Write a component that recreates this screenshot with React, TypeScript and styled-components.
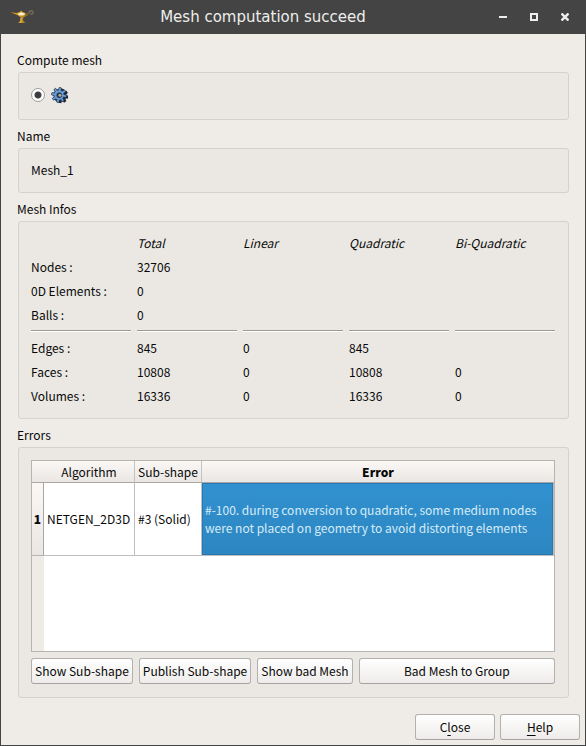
import React, { useId } from "react";
import styled, { createGlobalStyle, css } from "styled-components";

const GlobalStyle = createGlobalStyle`
  * { box-sizing: border-box; }
  body {
    margin: 0;
    background: #efebe7;
    color: #080808;
    font-family: "Noto Sans CJK SC", "Noto Sans", sans-serif;
    font-size: 12px;
    line-height: 18px;
  }
`;

const Window = styled.div`
  display: flex;
  flex-direction: column;
  min-height: 100vh;
  border: 1px solid #444444;
  border-top: 0;
  background: #efebe7;
`;

const TitleBar = styled.header`
  display: grid;
  grid-template-columns: 34px 1fr 94px;
  align-items: center;
  height: 34px;
  background: #444444;
  color: #eeeeec;
`;

const Title = styled.h1`
  margin: 0;
  font: 400 15px/20px "DejaVu Sans", sans-serif;
  text-align: center;
  white-space: nowrap;
`;

const LampIcon = styled.svg`
  display: block;
  margin-left: 7px;
`;

const WindowControls = styled.div`
  display: flex;
  justify-content: flex-end;
  gap: 11px;
  padding-right: 10px;
`;

const ControlButton = styled.button`
  display: grid;
  place-items: center;
  width: 20px;
  height: 20px;
  padding: 0;
  border: 0;
  background: none;
`;

const Content = styled.main`
  display: flex;
  flex: 1;
  flex-direction: column;
  gap: 4px;
  padding: 14px 16px 16px;
`;

const GroupRoot = styled.section<{ $grow?: boolean }>`
  display: flex;
  flex-direction: column;
  ${(p) => p.$grow && css`flex: 1;`}
`;

const GroupTitle = styled.h2`
  margin: 0;
  font-size: 12px;
  font-weight: 400;
  line-height: 24px;
`;

const GroupBox = styled.div`
  display: flex;
  flex: 1;
  flex-direction: column;
  margin-left: 1px;
  padding: 12px 13px 13px 12px;
  border: 1px solid #d5d1cd;
  border-radius: 3px;
  background: #ebe8e4;
`;

const AlgoChoice = styled.label`
  display: flex;
  align-items: flex-start;
  gap: 6px;
  height: 21px;
  padding-top: 2px;
`;

const Radio = styled.input`
  appearance: none;
  width: 14px;
  height: 14px;
  margin: 1px 0 0;
  border: 1px solid #a09e9b;
  border-radius: 50%;
  background: #ffffff;
  &:checked {
    background: radial-gradient(circle, #3c3c3c 0 2px, #444444 3px, #ffffff 4px);
  }
`;

const InfoTable = styled.table`
  display: grid;
  grid-template-columns: repeat(5, minmax(0, 1fr));
  gap: 6px;
  thead, tbody, tr { display: contents; }
`;

const InfoHead = styled.th`
  height: 18px;
  padding: 0;
  font-weight: 400;
  font-style: italic;
  text-align: left;
`;

const InfoLabel = styled.th`
  height: 18px;
  padding: 0;
  font-weight: 400;
  text-align: left;
`;

const InfoCell = styled.td`
  height: 18px;
  padding: 0;
`;

const RuleCell = styled.td`
  height: 3px;
  padding: 0;
  border-top: 1px solid #9c9a97;
  box-shadow: inset 0 1px #ffffff;
`;

const ErrorView = styled.div`
  flex: 1;
  border: 1px solid #b6b4b1;
  background: linear-gradient(90deg, #efebe7 12px, #ffffff 12px);
`;

const ErrorTable = styled.table`
  width: 100%;
  border-collapse: separate;
  border-spacing: 0;
  table-layout: fixed;
`;

const HeadCell = styled.th<{ $active?: boolean }>`
  height: 22px;
  padding: 0;
  border-right: 1px solid #c4c1be;
  border-bottom: 1px solid #a9a7a4;
  background: linear-gradient(#fbf7f4, #e9e6e3);
  font-weight: ${(p) => (p.$active ? 900 : 400)};
  text-align: center;
  white-space: nowrap;
  &:last-child { border-right: 0; }
`;

const CornerCell = styled.td`
  padding: 0;
  border-bottom: 1px solid #a9a7a4;
  background: linear-gradient(#fbf7f4, #e9e6e3);
`;

const RowHead = styled.th`
  height: 73px;
  padding: 0;
  border-right: 1px solid #a9a7a4;
  border-bottom: 1px solid #b6b4b1;
  background: linear-gradient(#fbf7f4, #e9e6e3);
  font-weight: 900;
`;

const Cell = styled.td`
  padding: 0 3px;
  border-right: 1px solid #c0bebb;
  border-bottom: 1px solid #c0bebb;
  background: #ffffff;
  white-space: nowrap;
`;

const SelectedCell = styled(Cell)`
  background: linear-gradient(#3191d0, #2d86c0) padding-box;
  box-shadow: inset 0 0 0 1px #2679b2;
  color: #d6ecf8;
  white-space: normal;
`;

const ButtonRow = styled.div`
  display: grid;
  grid-template-columns: auto auto auto 1fr;
  gap: 6px;
  margin-top: 6px;
`;

const Button = styled.button`
  height: 26px;
  padding: 0 3px;
  border: 1px solid #b3b1ae;
  border-bottom-color: #a5a3a0;
  border-radius: 3px;
  background: linear-gradient(#ffffff, #eeecea);
  color: inherit;
  font: inherit;
  white-space: nowrap;
`;

const DialogButton = styled(Button)`
  min-width: 80px;
`;

const Mnemonic = styled.span`
  text-decoration: underline;
  text-decoration-thickness: 1px;
  text-underline-offset: 3px;
`;

const Footer = styled.footer`
  display: flex;
  justify-content: flex-end;
  gap: 5px;
  padding: 0 5px 5px;
`;

const columns = ["", "Total", "Linear", "Quadratic", "Bi-Quadratic"];
const summary = [
  ["Nodes :", "32706", "", "", ""],
  ["0D Elements :", "0", "", "", ""],
  ["Balls :", "0", "", "", ""],
];
const details = [
  ["Edges :", "845", "0", "845", ""],
  ["Faces :", "10808", "0", "10808", "0"],
  ["Volumes :", "16336", "0", "16336", "0"],
];

function Group({ title, grow, children }: { title: string; grow?: boolean; children: React.ReactNode }) {
  const id = useId();
  return (
    <GroupRoot $grow={grow} aria-labelledby={id}>
      <GroupTitle id={id}>{title}</GroupTitle>
      <GroupBox>{children}</GroupBox>
    </GroupRoot>
  );
}

function InfoRow({ values }: { values: string[] }) {
  const [label, ...rest] = values;
  return (
    <tr>
      <InfoLabel scope="row">{label}</InfoLabel>
      {rest.map((value, i) => (
        <InfoCell key={i}>{value}</InfoCell>
      ))}
    </tr>
  );
}

function Lamp() {
  return (
    <LampIcon width="28" height="16" viewBox="0 1 28 16" aria-hidden="true">
      <defs>
        <linearGradient id="brass" x1="0" x2="1" y1="0" y2="0">
          <stop offset="0" stopColor="#b07d16" />
          <stop offset=".4" stopColor="#e0a72c" />
          <stop offset=".6" stopColor="#b88a2c" />
          <stop offset="1" stopColor="#5a4622" />
        </linearGradient>
      </defs>
      <path d="M2 4.300 9 5l3-1.200.8-1h1l.8 1L19 5.400l3.500-1.200-2.800 3.300-4.200 2-.6 2.800 2.600 2.700h-7.300l2.400-2.700.2-2.700-3.200-2.500L6.500 5.900Z" fill="url(#brass)" />
      <path d="M21 5.500c-.7-3 4-3.500 4.200-1.200.1 1.800-2 2.200-3 1.300" fill="none" stroke="#82715c" strokeWidth="1.200" />
      <ellipse cx="13.500" cy="6" rx="3.500" ry="1.500" fill="#f7dfa6" />
      <ellipse cx="13.500" cy="5.800" rx="1.500" ry="1" fill="#ffffff" />
      <path d="M13 10v4.500" stroke="#f2bd37" />
    </LampIcon>
  );
}

const teeth = [0, 45, 90, 135, 180, 225, 270, 315];

function Gear() {
  return (
    <svg width="17" height="17" viewBox="0 0 17 17" aria-hidden="true">
      <g fill="#1b2430">
        {teeth.map((a) => (
          <rect key={a} x="8.600" y="1.600" width="3" height="4" transform={`rotate(${a + 10} 10.100 8.900)`} />
        ))}
        <circle cx="10.100" cy="8.900" r="5.500" />
      </g>
      <g fill="#5f93cf" stroke="#22384f" strokeWidth=".8">
        {teeth.map((a) => (
          <rect key={a} x="6.800" y=".6" width="2.400" height="4" rx=".4" transform={`rotate(${a + 10} 8 8)`} />
        ))}
        <circle cx="8" cy="8" r="5.200" />
      </g>
      <g fill="#6ea2dc">
        {teeth.map((a) => (
          <rect key={a} x="7.300" y="1.200" width="1.400" height="4" transform={`rotate(${a + 10} 8 8)`} />
        ))}
      </g>
      <circle cx="8.300" cy="8.200" r="2.700" fill="#22313f" />
      <circle cx="8.900" cy="8.300" r="1.500" fill="#b4ae9f" />
    </svg>
  );
}

export default function App() {
  return (
    <>
      <GlobalStyle />
      <Window>
        <TitleBar>
          <Lamp />
          <Title>Mesh computation succeed</Title>
          <WindowControls>
            <ControlButton aria-label="Minimize">
              <svg width="8" height="8" shapeRendering="crispEdges">
                <path d="M0 3h8v2H0z" fill="#eeeeec" />
              </svg>
            </ControlButton>
            <ControlButton aria-label="Maximize">
              <svg width="8" height="8" shapeRendering="crispEdges">
                <path d="M1 1h6v6H1z" fill="none" stroke="#eeeeec" strokeWidth="2" />
              </svg>
            </ControlButton>
            <ControlButton aria-label="Close window">
              <svg width="8" height="8">
                <path d="M.5.5l7 7M7.500.5l-7 7" stroke="#eeeeec" strokeWidth="2.400" />
              </svg>
            </ControlButton>
          </WindowControls>
        </TitleBar>

        <Content>
          <Group title="Compute mesh">
            <AlgoChoice>
              <Radio type="radio" name="construction" aria-label="Mesh" defaultChecked />
              <Gear />
            </AlgoChoice>
          </Group>

          <Group title="Name">
            <span>Mesh_1</span>
          </Group>

          <Group title="Mesh Infos">
            <InfoTable>
              <thead>
                <tr>
                  {columns.map((name) => (
                    <InfoHead key={name} scope="col">{name}</InfoHead>
                  ))}
                </tr>
              </thead>
              <tbody>
                {summary.map((row) => <InfoRow key={row[0]} values={row} />)}
                <tr aria-hidden="true">
                  {columns.map((name) => <RuleCell key={name} />)}
                </tr>
                {details.map((row) => <InfoRow key={row[0]} values={row} />)}
              </tbody>
            </InfoTable>
          </Group>

          <Group title="Errors" grow>
            <ErrorView>
              <ErrorTable>
                <colgroup>
                  <col width="12" />
                  <col width="91" />
                  <col width="67" />
                  <col />
                </colgroup>
                <thead>
                  <tr>
                    <CornerCell />
                    <HeadCell scope="col">Algorithm</HeadCell>
                    <HeadCell scope="col">Sub-shape</HeadCell>
                    <HeadCell scope="col" $active>Error</HeadCell>
                  </tr>
                </thead>
                <tbody>
                  <tr>
                    <RowHead scope="row">1</RowHead>
                    <Cell>NETGEN_2D3D</Cell>
                    <Cell>#3 (Solid)</Cell>
                    <SelectedCell>
                      #-100. during conversion to quadratic, some medium nodes were not
                      placed on geometry to avoid distorting elements
                    </SelectedCell>
                  </tr>
                </tbody>
              </ErrorTable>
            </ErrorView>
            <ButtonRow>
              <Button>Show Sub-shape</Button>
              <Button>Publish Sub-shape</Button>
              <Button>Show bad Mesh</Button>
              <Button>Bad Mesh to Group</Button>
            </ButtonRow>
          </Group>
        </Content>

        <Footer>
          <DialogButton>C<Mnemonic>l</Mnemonic>ose</DialogButton>
          <DialogButton><Mnemonic>H</Mnemonic>elp</DialogButton>
        </Footer>
      </Window>
    </>
  );
}
